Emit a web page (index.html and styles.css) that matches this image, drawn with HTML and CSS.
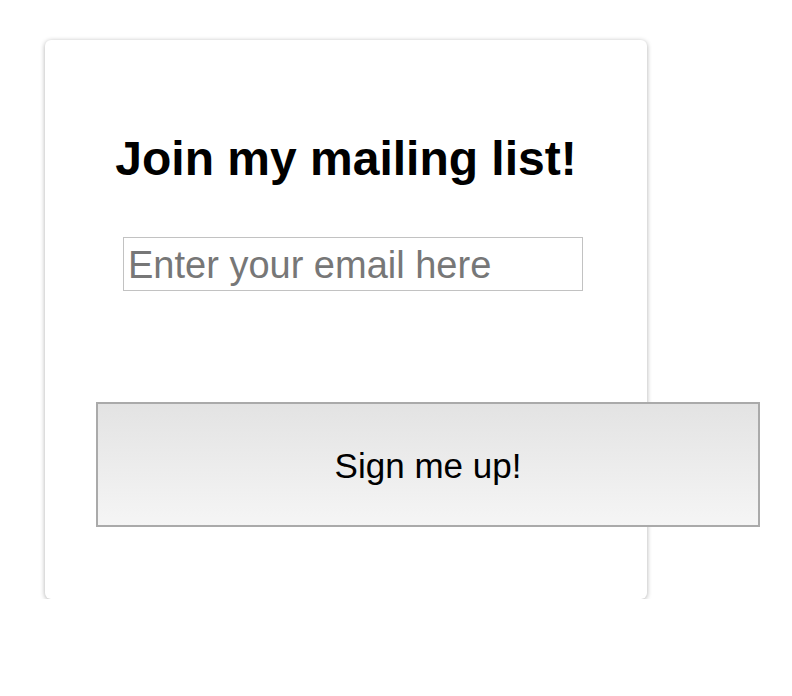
FILE: index.html
```
<!DOCTYPE html>
<html>
<head>
<meta charset="utf-8">
<link rel="stylesheet" href="styles.css">
</head>
<body>
<div class="page">
  <form class="card">
    <h1 class="title">Join my mailing list!</h1>
    <input class="email" type="email" placeholder="Enter your email here">
    <button class="signup" type="button">Sign me up!</button>
  </form>
</div>
</body>
</html>
```
FILE: styles.css
```
html, body {
  margin: 0;
  padding: 0;
  background: #ffffff;
}
body {
  font-family: "Liberation Sans", Arial, sans-serif;
}
.page {
  padding: 40px 0 0 45px;
}
.card {
  box-sizing: border-box;
  width: 602px;
  height: 559px;
  margin: 0;
  background: #ffffff;
  border-radius: 6px;
  box-shadow: 0 1px 5px rgba(0, 0, 0, 0.32);
  display: flex;
  flex-direction: column;
  align-items: flex-start;
  padding-top: 91px;
}
.title {
  align-self: stretch;
  margin: 0;
  text-align: center;
  font-size: 48px;
  line-height: 56px;
  font-weight: bold;
  color: #000000;
}
.email {
  box-sizing: border-box;
  margin: 50px 0 0 78px;
  width: 460px;
  height: 54px;
  padding: 3px 4px 0 4px;
  border: 1px solid #c2c2c2;
  border-radius: 0;
  font-family: "Liberation Sans", Arial, sans-serif;
  font-size: 38px;
  color: #000;
  outline: none;
}
.email::placeholder {
  color: #777777;
  opacity: 1;
}
.signup {
  box-sizing: border-box;
  flex-shrink: 0;
  margin: 111px 0 0 51px;
  width: 664px;
  height: 125px;
  padding: 3px 0 0 0;
  border: 2px solid #aaaaaa;
  border-radius: 0;
  background: linear-gradient(to bottom, #e3e3e3, #f5f5f5);
  font-family: "Liberation Sans", Arial, sans-serif;
  font-size: 35px;
  color: #000000;
}
```
